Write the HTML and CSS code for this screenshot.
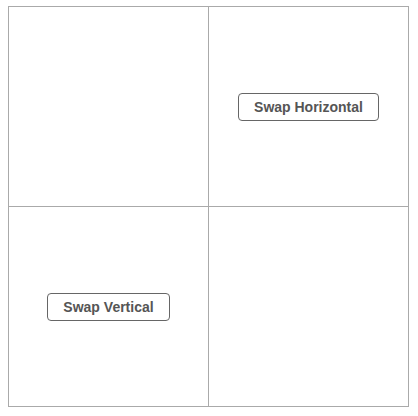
FILE: index.html
```html
<!DOCTYPE html>
<html>
<head>
<meta charset="utf-8">
<link rel="stylesheet" href="styles.css">
</head>
<body>
<div class="grid">
  <div class="cell"></div>
  <div class="cell"><button class="btn">Swap Horizontal</button></div>
  <div class="cell"><button class="btn">Swap Vertical</button></div>
  <div class="cell"></div>
</div>
</body>
</html>
```
FILE: styles.css
```css
html, body {
  margin: 0;
  background: #fff;
}
body {
  padding: 6px 8px;
  font-family: "Liberation Sans", Arial, sans-serif;
}
.grid {
  display: grid;
  grid-template-columns: 200px 200px;
  grid-template-rows: 200px 200px;
  width: 400px;
  border-top: 1px solid #aaa;
  border-left: 1px solid #aaa;
}
.cell {
  border-right: 1px solid #aaa;
  border-bottom: 1px solid #aaa;
  display: flex;
  align-items: center;
  justify-content: center;
}
.btn {
  font-family: "Liberation Sans", Arial, sans-serif;
  font-weight: bold;
  font-size: 14px;
  color: #555;
  background: #fff;
  border: 1px solid #666;
  border-radius: 4px;
  height: 28px;
  padding: 0 15px;
  cursor: pointer;
}
```
